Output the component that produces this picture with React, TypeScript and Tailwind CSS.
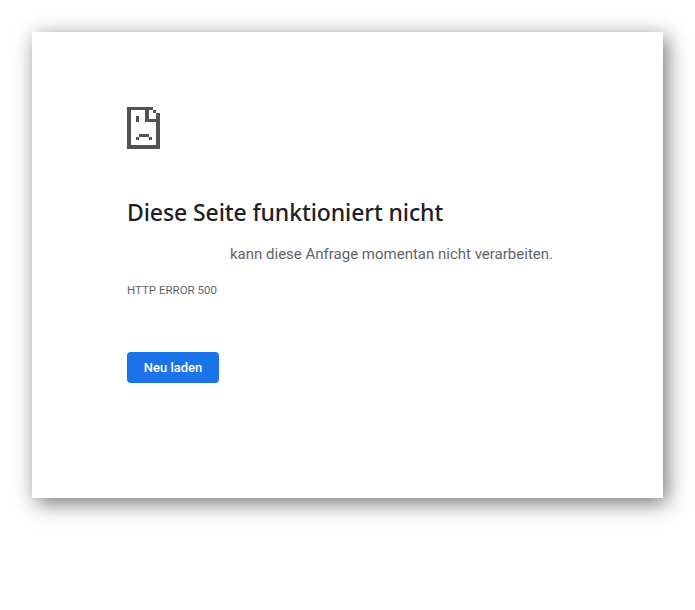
const App = () => {
  return (
    <div className="min-h-[610px] bg-white pt-8 pl-8 font-['Roboto',sans-serif]">
      <div className="w-[631px] h-[466px] bg-white pl-[95px] pt-[75px] shadow-[4px_5px_20px_rgba(0,0,0,0.55)]">
        {/* Sad page icon */}
        <svg width="33" height="42" viewBox="0 0 33 42" className="block" shapeRendering="crispEdges" fill="#525252">
          <path d="M0 0h26v3h-22v35h25v-32h4v36h-33z" />
          <path d="M26 3h3v3h-3z" />
          <path d="M18 3h4v9h7v3h-11z" />
          <path d="M9 9h3v6h-3z" />
          <path d="M12 27h10v3h3v3h-3v-3h-10v3h-3v-3h3z" />
        </svg>
        <h1 className="mt-[46px] text-[23px] leading-[34px] font-['Noto_Sans',sans-serif] font-medium tracking-[-0.1px] text-[#202124]">Diese Seite funktioniert nicht</h1>
        <p className="mt-[12px] pl-[103px] text-[15px] leading-[26px] text-[#5f6368]">kann diese Anfrage momentan nicht verarbeiten.</p>
        <div className="mt-[15px] text-[11.5px] leading-[16px] text-[#5f6368]">HTTP ERROR 500</div>
        <button className="mt-[54px] w-[92px] h-[31px] rounded bg-[#1a73e8] text-[13px] font-medium text-white">Neu laden</button>
      </div>
    </div>
  )
}

export default App
